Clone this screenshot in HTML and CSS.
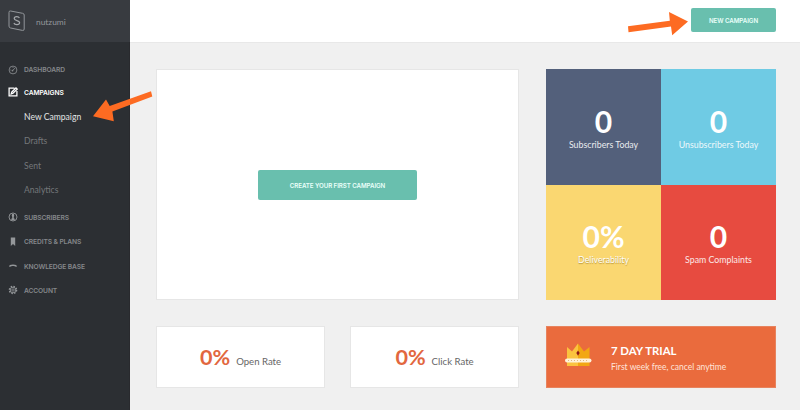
FILE: index.html
```html
<!DOCTYPE html>
<html lang="en">
<head>
<meta charset="utf-8">
<title>Dashboard</title>
<link rel="stylesheet" href="styles.css">
</head>
<body>
<div class="app">
  <aside class="sidebar">
    <div class="brand">
      <svg class="logo" width="18" height="22" viewBox="0 0 18 22"><path d="M2.6 1 L14.6 3.3 Q16.2 3.6 16.2 5 L16.2 19 Q16.2 20.8 14.4 20.4 L2.6 18 Q1 17.7 1 16.1 L1 2.4 Q1 .7 2.6 1Z" fill="none" stroke="#92969a"/><path d="M11.4 7.9C10.9 6.9 10 6.6 8.8 6.6C7.1 6.6 6.2 7.4 6.2 8.6C6.2 11.3 11.6 9.9 11.6 12.6C11.6 14 10.4 14.7 8.9 14.7C7.4 14.7 6.3 14.2 5.9 13" fill="none" stroke="#a5a8ab" stroke-width="1.2"/></svg>
      <span class="brand-name">nutzumi</span>
    </div>
    <nav class="nav">
      <a class="item"><svg class="icon" viewBox="0 0 10 10"><circle cx="5" cy="5" r="3.9" fill="none" stroke="#85888b" stroke-width=".9"/><path d="M4.3 5.8 7.3 2.9M2.4 5h.8M5 2.2v.8" stroke="#85888b" stroke-width=".9"/><circle cx="4.5" cy="5.6" r=".9" fill="#85888b"/></svg><span class="label">DASHBOARD</span></a>
      <a class="item on"><svg class="icon" viewBox="0 0 10 10"><path d="M6.5 1.1H1.1v7.8h7.8V4M3.2 7l.5-1.8L8 .9l1.2 1.2L5 6.3Z" fill="none" stroke="#fff" stroke-width="1.3"/></svg><span class="label">CAMPAIGNS</span></a>
      <a class="sub current">New Campaign</a>
      <a class="sub">Drafts</a>
      <a class="sub">Sent</a>
      <a class="sub">Analytics</a>
      <a class="item first"><svg class="icon" viewBox="0 0 10 10"><circle cx="5" cy="5" r="4" fill="none" stroke="#94979a" stroke-width=".9"/><path d="M5 1.8C3.5 1.8 3.6 4 4.2 4.8V6.2L2.6 7.3 5 8.6 7.4 7.3 5.8 6.2V4.8C6.4 4 6.5 1.8 5 1.8Z" fill="#94979a"/></svg><span class="label">SUBSCRIBERS</span></a>
      <a class="item row"><svg class="icon" viewBox="0 0 10 10"><path d="M2.8.5H7.2V9L5 7 2.8 9Z" fill="#94979a"/></svg><span class="label">CREDITS &amp; PLANS</span></a>
      <a class="item row"><svg class="icon" viewBox="0 0 10 10"><path d="M1.1 5.8Q.9 3.5 5 3.5T8.9 5.8L6.7 5.5 6.4 4.9H3.6L3.3 5.5Z" fill="#94979a"/></svg><span class="label">KNOWLEDGE BASE</span></a>
      <a class="item row"><svg class="icon" viewBox="0 0 10 10"><circle cx="5" cy="5" r="3.6" fill="none" stroke="#94979a" stroke-width="1.4" stroke-dasharray="1.5 1.327"/><circle cx="5" cy="5" r="2.8" fill="none" stroke="#94979a" stroke-width=".9"/><circle cx="5" cy="5" r="1.2" fill="none" stroke="#94979a" stroke-width=".8"/></svg><span class="label">ACCOUNT</span></a>
    </nav>
  </aside>
  <div class="page">
    <header class="topbar"><a class="button small">NEW CAMPAIGN</a></header>
    <main class="content">
      <section class="panel hero"><a class="button large">CREATE YOUR FIRST CAMPAIGN</a></section>
      <section class="stats">
        <div class="stat navy"><strong>0</strong><span>Subscribers Today</span></div>
        <div class="stat sky"><strong>0</strong><span>Unsubscribers Today</span></div>
        <div class="stat yellow"><strong>0%</strong><span>Deliverability</span></div>
        <div class="stat red"><strong>0</strong><span>Spam Complaints</span></div>
      </section>
      <section class="rates">
        <div class="panel rate"><strong>0%</strong><span>Open Rate</span></div>
        <div class="panel rate"><strong>0%</strong><span>Click Rate</span></div>
      </section>
      <section class="trial">
        <svg class="crown" width="28" height="24" viewBox="0 0 28 24"><path d="M3 4 8 8.5 14 .5V23H3Z" fill="#fbc33f"/><path d="M14 .5 20 8.5 25.5 4V23H14Z" fill="#f2a713"/><rect x="1" y="15.4" width="26.5" height="4.2" rx="2.1" fill="#fff2d9"/><path d="M4 17.5h21" stroke="#dfb883" stroke-width="1" stroke-dasharray="1 2"/><path d="M14 7.5 15.7 10 14 12.8 12.3 10Z" fill="#8e1818"/></svg>
        <div class="trial-text"><strong>7 DAY TRIAL</strong><span>First week free, cancel anytime</span></div>
      </section>
    </main>
  </div>
  <svg class="arrows" width="800" height="410" viewBox="0 0 800 410"><path d="M151 91.2 152.3 96.6 112.4 111.5 113.8 121.2 93 116.2 106 99.5 109.7 106Z" fill="#fd6b22"/><path d="M628 26.2 669.8 20.8 669 12 688 21.6 672.2 35.2 671 26.5 628.5 32.2Z" fill="#fd6b22"/></svg>
</div>
</body>
</html>
```
FILE: styles.css
```css
* { box-sizing: border-box; }
body { margin: 0; font-family: Lato, sans-serif; background: #f0f0f0; }
.app { position: relative; display: flex; width: 800px; height: 410px; overflow: hidden; }
.sidebar { width: 130px; background: #2c2f33; border-right: 1px solid #292a2e; }
.brand { display: flex; height: 42px; width: 130px; padding: 10px 0 0 8px; background: #383b40; }
.brand-name { margin-left: 10px; font-size: 8.4px; line-height: 25px; color: #94979b; }
.nav { padding-top: 17px; }
.item { display: flex; align-items: center; height: 22.5px; padding-left: 8px; color: #85888b; }
.icon { width: 10px; height: 10px; margin-top: -1px; }
.label { margin-left: 6px; font: 600 6.7px/22px Inter, sans-serif; letter-spacing: -.12px; }
.on { color: #fff; margin-bottom: 1px; }
.sub { display: block; height: 24.4px; padding-left: 24px; font-size: 8.6px; line-height: 24.4px; color: #74777a; }
.current { color: #e2e3e4; }
.first { margin-top: 3px; height: 24.4px; }
.row { height: 24.4px; }
.page { width: 670px; }
.topbar { display: flex; justify-content: flex-end; height: 43px; padding: 8px 24px 0 0; background: #fff; border-bottom: 1px solid #e8e8e8; }
.button { display: flex; align-items: center; justify-content: center; border-radius: 2px; background: #69bfae; color: #e9fffa; font-family: Inter, sans-serif; font-weight: 600; }
.small { width: 85px; height: 24px; padding-top: 1px; font-size: 6.2px; letter-spacing: -.07px; }
.large { width: 159px; height: 30px; padding-top: 1px; font-size: 6.2px; letter-spacing: -.08px; }
.content { display: grid; grid-template-columns: 363px 231px; grid-template-rows: 231px 62px; gap: 26px; padding: 26px 24px 0 26px; }
.panel { background: #fff; border: 1px solid #e6e6e6; }
.hero { display: flex; align-items: center; justify-content: center; }
.stats { display: grid; grid-template-columns: 115px 115px; grid-template-rows: 116px 115px; padding-left: 1px; }
.stat { display: flex; flex-direction: column; align-items: center; color: #fff; padding-top: 34px; }
.stat strong { font: 700 30px/36px Lato, sans-serif; }
.stat span { font-size: 8.8px; line-height: 11px; opacity: .88; }
.navy { background: #53607b; }
.sky { background: #6fcbe4; }
.yellow { background: #fad771; }
.red { background: #e74b40; }
.yellow, .red { padding-top: 33px; }
.yellow span { opacity: 1; text-shadow: 0 1px 1px #b5953c; }
.rates { display: grid; grid-template-columns: 169px 169px; justify-content: space-between; }
.rate { display: flex; align-items: baseline; justify-content: center; gap: 6px; padding-top: 17px; }
.rate strong { color: #e2673f; font: 700 21.6px/27px Lato, sans-serif; }
.rate span { color: #666; font-size: 9.6px; }
.trial { display: flex; margin-left: 1px; background: #ea6b3d; border: 1px solid #e7835e; padding: 16px 0 0 17px; }
.trial-text { display: flex; flex-direction: column; margin-left: 19px; color: #fff; }
.trial-text strong { font-size: 11.4px; line-height: 16px; }
.trial-text span { font-size: 8.5px; line-height: 16px; color: #ffe3d9; }
.arrows { position: absolute; inset: 0; }
```
